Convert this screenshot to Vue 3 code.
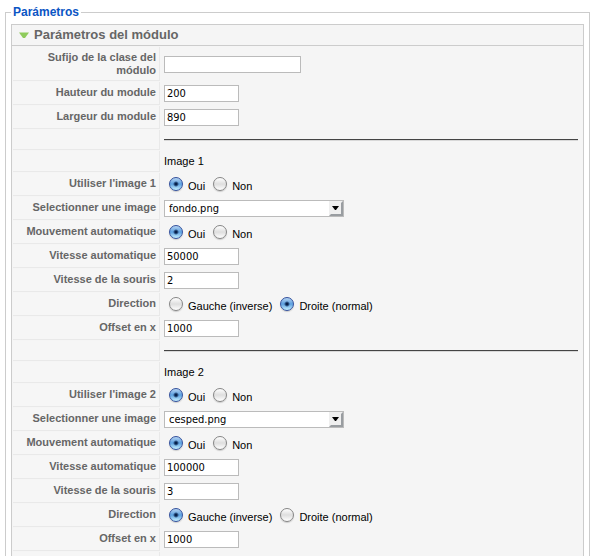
<script setup>
import { reactive } from 'vue'

const yesNo = ['Oui', 'Non']
const directions = ['Gauche (inverse)', 'Droite (normal)']

const imageRows = (n, file, speed, mouse, direction) => [
  { id: `sep${n}`, type: 'rule' },
  { id: `title${n}`, type: 'title', text: `Image ${n}` },
  { id: `use${n}`, type: 'radio', label: `Utiliser l'image ${n}`, options: yesNo, value: 'Oui' },
  { id: `file${n}`, type: 'select', label: 'Selectionner une image', options: ['fondo.png', 'cesped.png'], value: file },
  { id: `auto${n}`, type: 'radio', label: 'Mouvement automatique', options: yesNo, value: 'Oui' },
  { id: `speed${n}`, type: 'text', label: 'Vitesse automatique', value: speed },
  { id: `mouse${n}`, type: 'text', label: 'Vitesse de la souris', value: mouse },
  { id: `dir${n}`, type: 'radio', label: 'Direction', options: directions, value: direction },
  { id: `offset${n}`, type: 'text', label: 'Offset en x', value: '1000' }
]

const rows = reactive([
  { id: 'suffix', type: 'text', label: 'Sufijo de la clase del módulo', value: '', wide: true },
  { id: 'height', type: 'text', label: 'Hauteur du module', value: '200' },
  { id: 'width', type: 'text', label: 'Largeur du module', value: '890' },
  ...imageRows(1, 'fondo.png', '50000', '2', 'Droite (normal)'),
  ...imageRows(2, 'cesped.png', '100000', '3', 'Gauche (inverse)'),
  { id: 'sep3', type: 'rule' }
])
</script>

<template>
  <fieldset class="params">
    <legend>Parámetros</legend>
    <section class="panel">
      <h3 class="panel-title">
        <svg class="toggle" width="10" height="7" viewBox="0 0 10 7" aria-hidden="true">
          <path d="M0 0.5H10L6 6H4Z" fill="#8fcb5c" />
        </svg>
        <span>Parámetros del módulo</span>
      </h3>
      <table class="form-table">
        <colgroup>
          <col class="label-col" />
          <col />
        </colgroup>
        <tbody>
          <tr v-for="row in rows" :key="row.id" :class="['row', row.type]">
            <td class="key">
              <span v-if="row.type === 'radio'" :id="row.id + '-label'">{{ row.label }}</span>
              <label v-else-if="row.label" :for="row.id">{{ row.label }}</label>
            </td>
            <td class="value">
              <hr v-if="row.type === 'rule'" class="rule-line" />
              <span v-else-if="row.type === 'title'">{{ row.text }}</span>
              <input
                v-else-if="row.type === 'text'"
                :id="row.id"
                v-model="row.value"
                type="text"
                :class="['box', { wide: row.wide }]"
              />
              <div v-else-if="row.type === 'select'" class="picker">
                <select :id="row.id" v-model="row.value" class="box">
                  <option v-for="o in row.options" :key="o">{{ o }}</option>
                </select>
                <svg class="arrow" width="14" height="15" viewBox="0 0 14 15" aria-hidden="true">
                  <rect width="14" height="15" fill="#efefef" />
                  <path d="M14 0V15H0L2 13H12V2Z" fill="#999da1" />
                  <path d="M3 5H10L7 9H6Z" fill="#000" />
                </svg>
              </div>
              <div v-else class="choices" role="radiogroup" :aria-labelledby="row.id + '-label'">
                <label v-for="o in row.options" :key="o" class="choice">
                  <input v-model="row.value" type="radio" :name="row.id" :value="o" />
                  <span>{{ o }}</span>
                </label>
              </div>
            </td>
          </tr>
        </tbody>
      </table>
    </section>
  </fieldset>
</template>

<style>
html {
  scrollbar-width: none;
  background: #fff;
}
</style>

<style scoped>
.params {
  min-width: 0;
  margin: 5px 7px 10px 5px;
  padding: 5px;
  border: 1px solid #ccc;
  font-family: "Liberation Sans", Arial, sans-serif;
  font-size: 11px;
  line-height: 13px;
  color: #000;
}

legend {
  padding: 0 2px;
  font-size: 12px;
  font-weight: bold;
  line-height: 14px;
  color: #0b55c4;
}

.panel {
  border: 1px solid #ccc;
  background: #f5f5f5;
}

.panel-title {
  display: flex;
  align-items: center;
  gap: 5px;
  height: 20px;
  margin: 0;
  padding: 0 7px;
  border-bottom: 1px solid #ccc;
  font-size: 13px;
  line-height: 22px;
  color: #666;
}

.form-table {
  width: 100%;
  table-layout: fixed;
  border-spacing: 1px;
}

.label-col {
  width: 147px;
}

td {
  box-sizing: border-box;
  height: 23px;
  padding: 0 4px 0 3px;
}

.rule td {
  height: 20px;
}

.title td {
  height: 21px;
}

.key {
  padding: 4px 3px 2px;
  border-right: 1px solid #e9e9e9;
  border-bottom: 1px solid #e9e9e9;
  background: #f6f6f6;
  font-weight: bold;
  color: #666;
  text-align: right;
  vertical-align: top;
}

.row:first-child .key {
  height: 34px;
}

.value {
  vertical-align: middle;
}

.rule-line {
  height: 1px;
  margin: 0;
  border: 0;
  border-bottom: 1px solid #d8d8d8;
  background: #444;
}

.box {
  display: block;
  box-sizing: border-box;
  width: 75px;
  height: 17px;
  margin: 0;
  padding: 0 2px;
  border: 1px solid #bbb;
  border-radius: 0;
  background: #fff;
  font-family: "DejaVu Sans Condensed", "DejaVu Sans", sans-serif;
  font-size: 11px;
  line-height: 15px;
  color: #000;
}

.box.wide {
  width: 137px;
}

.picker {
  position: relative;
  width: 180px;
}

.picker .box {
  width: 100%;
  padding: 0 16px 0 4px;
  appearance: none;
}

.arrow {
  position: absolute;
  top: 1px;
  right: 1px;
  pointer-events: none;
}

.choices {
  display: flex;
  gap: 8px;
  padding-left: 5px;
}

.choice {
  display: flex;
  align-items: flex-start;
  gap: 5px;
}

.choice span {
  padding-top: 3px;
}

.choice input {
  appearance: none;
  width: 14px;
  height: 14px;
  margin: 0;
  border: 1px solid #858585;
  border-radius: 50%;
  background: linear-gradient(#fff 0%, #dedede 50%, #fff 100%);
  box-shadow: 0 1px 1px #ccc;
}

.choice input:checked {
  border-color: #33509c;
  background:
    radial-gradient(circle at 50% 50%, #07204a 0 1px, transparent 3px),
    linear-gradient(#b5d3f2 0%, #5b9fdf 50%, #c5f0ff 100%);
}
</style>
